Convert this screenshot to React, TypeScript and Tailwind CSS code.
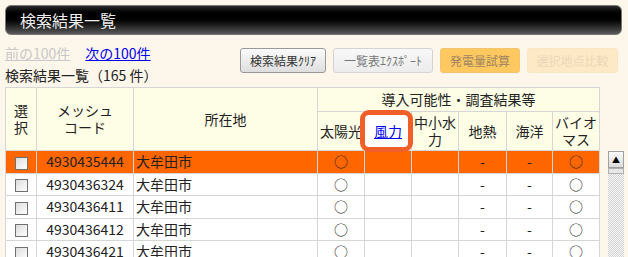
import React from "react";

const rows = [
  { code: "4930435444", city: "大牟田市", selected: true },
  { code: "4930436324", city: "大牟田市" },
  { code: "4930436411", city: "大牟田市" },
  { code: "4930436412", city: "大牟田市" },
  { code: "4930436421", city: "大牟田市" },
];

const cols = ["w-[31px]", "w-[97px]", "w-[184px]", "w-[47px]", "w-[47px]", "w-[47px]", "w-[48px]", "w-[46px]", "w-[47px]"];

function Checkbox() {
  return (
    <span className="inline-block h-[13px] w-[13px] border border-[#707070] bg-linear-to-br from-[#dcdcdc] to-white align-middle" />
  );
}

export default function App() {
  return (
    <div className="h-[257px] w-[628px] overflow-hidden bg-[#fdf6ea] font-['Noto_Sans_CJK_JP','Liberation_Sans',sans-serif] text-[#222]">
      {/* Title bar */}
      <div className="mx-[5px] mt-[5px] flex h-[30px] w-[617px] items-center rounded-[6px] border border-[#777] bg-linear-to-b from-[#2a2a2a] via-[#000] via-35% to-[#5a5a5a] pl-[14px] text-[16px] text-[#eee]">
        検索結果一覧
      </div>

      {/* Links + buttons */}
      <div className="flex h-[52px] pl-[5px]">
        <div className="flex w-[235px] flex-col pt-[9px] text-[14px] leading-[18px]">
          <div className="flex gap-[15px]">
            <span className="text-[#c8c8c8] underline">前の100件</span>
            <span className="text-[#0000ee] underline">次の100件</span>
          </div>
          <div className="mt-[4px] whitespace-nowrap">検索結果一覧（165 件）</div>
        </div>
        <div className="flex gap-[7px] pt-[13px] text-[12px]">
          <div className="flex h-[25px] w-[86px] items-center justify-center rounded-[3px] border border-[#999] bg-linear-to-b from-[#fbfbfb] to-[#dedede] text-[#333]">
            検索結果ｸﾘｱ
          </div>
          <div className="flex h-[25px] w-[100px] items-center justify-center rounded-[3px] border border-[#d4d4d4] bg-linear-to-b from-[#f8f8f8] to-[#ececec] text-[#777]">
            一覧表ｴｸｽﾎﾟｰﾄ
          </div>
          <div className="flex h-[25px] w-[80px] items-center justify-center rounded-[3px] border border-[#f2c570] bg-[#fdc860] text-[#a08560]">
            発電量試算
          </div>
          <div className="flex h-[25px] w-[91px] items-center justify-center rounded-[3px] border border-[#fbe6c4] bg-[#fde9c6] text-[#ecd7b8]">
            選択地点比較
          </div>
        </div>
      </div>

      {/* Table */}
      <div className="relative flex pl-[5px]">
        <div>
          <table className="table-fixed border-collapse text-[14px] leading-[17px]">
            <colgroup>
              {cols.map((c, i) => (
                <col key={i} className={c} />
              ))}
            </colgroup>
            <thead className="bg-[#fefee6]">
              <tr className="h-[24px]">
                <th rowSpan={2} className="border border-[#d6d6d6] font-normal">
                  選<br />択
                </th>
                <th rowSpan={2} className="border border-[#d6d6d6] font-normal">
                  メッシュ<br />コード
                </th>
                <th rowSpan={2} className="border border-[#d6d6d6] font-normal">
                  所在地
                </th>
                <th colSpan={6} className="border border-[#d6d6d6] font-normal">
                  導入可能性・調査結果等
                </th>
              </tr>
              <tr className="h-[39px]">
                <th className="border border-[#d6d6d6] font-normal">太陽光</th>
                <th className="relative border border-[#d6d6d6] bg-white font-normal">
                  <span className="text-[#0000ee] underline">風力</span>
                  <span className="absolute -left-[5px] -right-[2px] -top-[2px] bottom-[-2px] rounded-[9px] border-[5px] border-[#f05f2a]" />
                </th>
                <th className="border border-[#d6d6d6] font-normal">
                  中小水<br />力
                </th>
                <th className="border border-[#d6d6d6] font-normal">地熱</th>
                <th className="border border-[#d6d6d6] font-normal">海洋</th>
                <th className="border border-[#d6d6d6] font-normal">
                  バイオ<br />マス
                </th>
              </tr>
            </thead>
            <tbody>
              {rows.map((r) => (
                <tr key={r.code} className={`h-[22.5px] ${r.selected ? "bg-[#ff6600]" : "bg-white"}`}>
                  <td className="border border-[#d6d6d6] text-center">
                    <Checkbox />
                  </td>
                  <td className="border border-[#d6d6d6] text-center">{r.code}</td>
                  <td className="border border-[#d6d6d6] pl-[2px]">{r.city}</td>
                  <td className="border border-[#d6d6d6] text-center text-[14px]">○</td>
                  <td className="border border-[#d6d6d6]" />
                  <td className="border border-[#d6d6d6]" />
                  <td className="border border-[#d6d6d6] text-center">-</td>
                  <td className="border border-[#d6d6d6] text-center">-</td>
                  <td className="border border-[#d6d6d6] text-center text-[14px]">○</td>
                </tr>
              ))}
            </tbody>
          </table>
        </div>

        {/* Scrollbar */}
        <div className="ml-[8px] mt-[64px] flex w-[16px] flex-col">
          <div className="flex h-[17px] items-center justify-center border border-[#a0a0a0] bg-linear-to-b from-[#fafafa] to-[#dcdcdc] text-[8px] leading-none text-black">
            ▲
          </div>
          <div className="h-[6px] border border-[#b0b0b0] bg-[#e6e6e6]" />
          <div className="h-[90px] bg-[repeating-conic-gradient(#d4d4d4_0_25%,#f6f6f6_0_50%)] bg-[length:2px_2px]" />
        </div>
      </div>
    </div>
  );
}
